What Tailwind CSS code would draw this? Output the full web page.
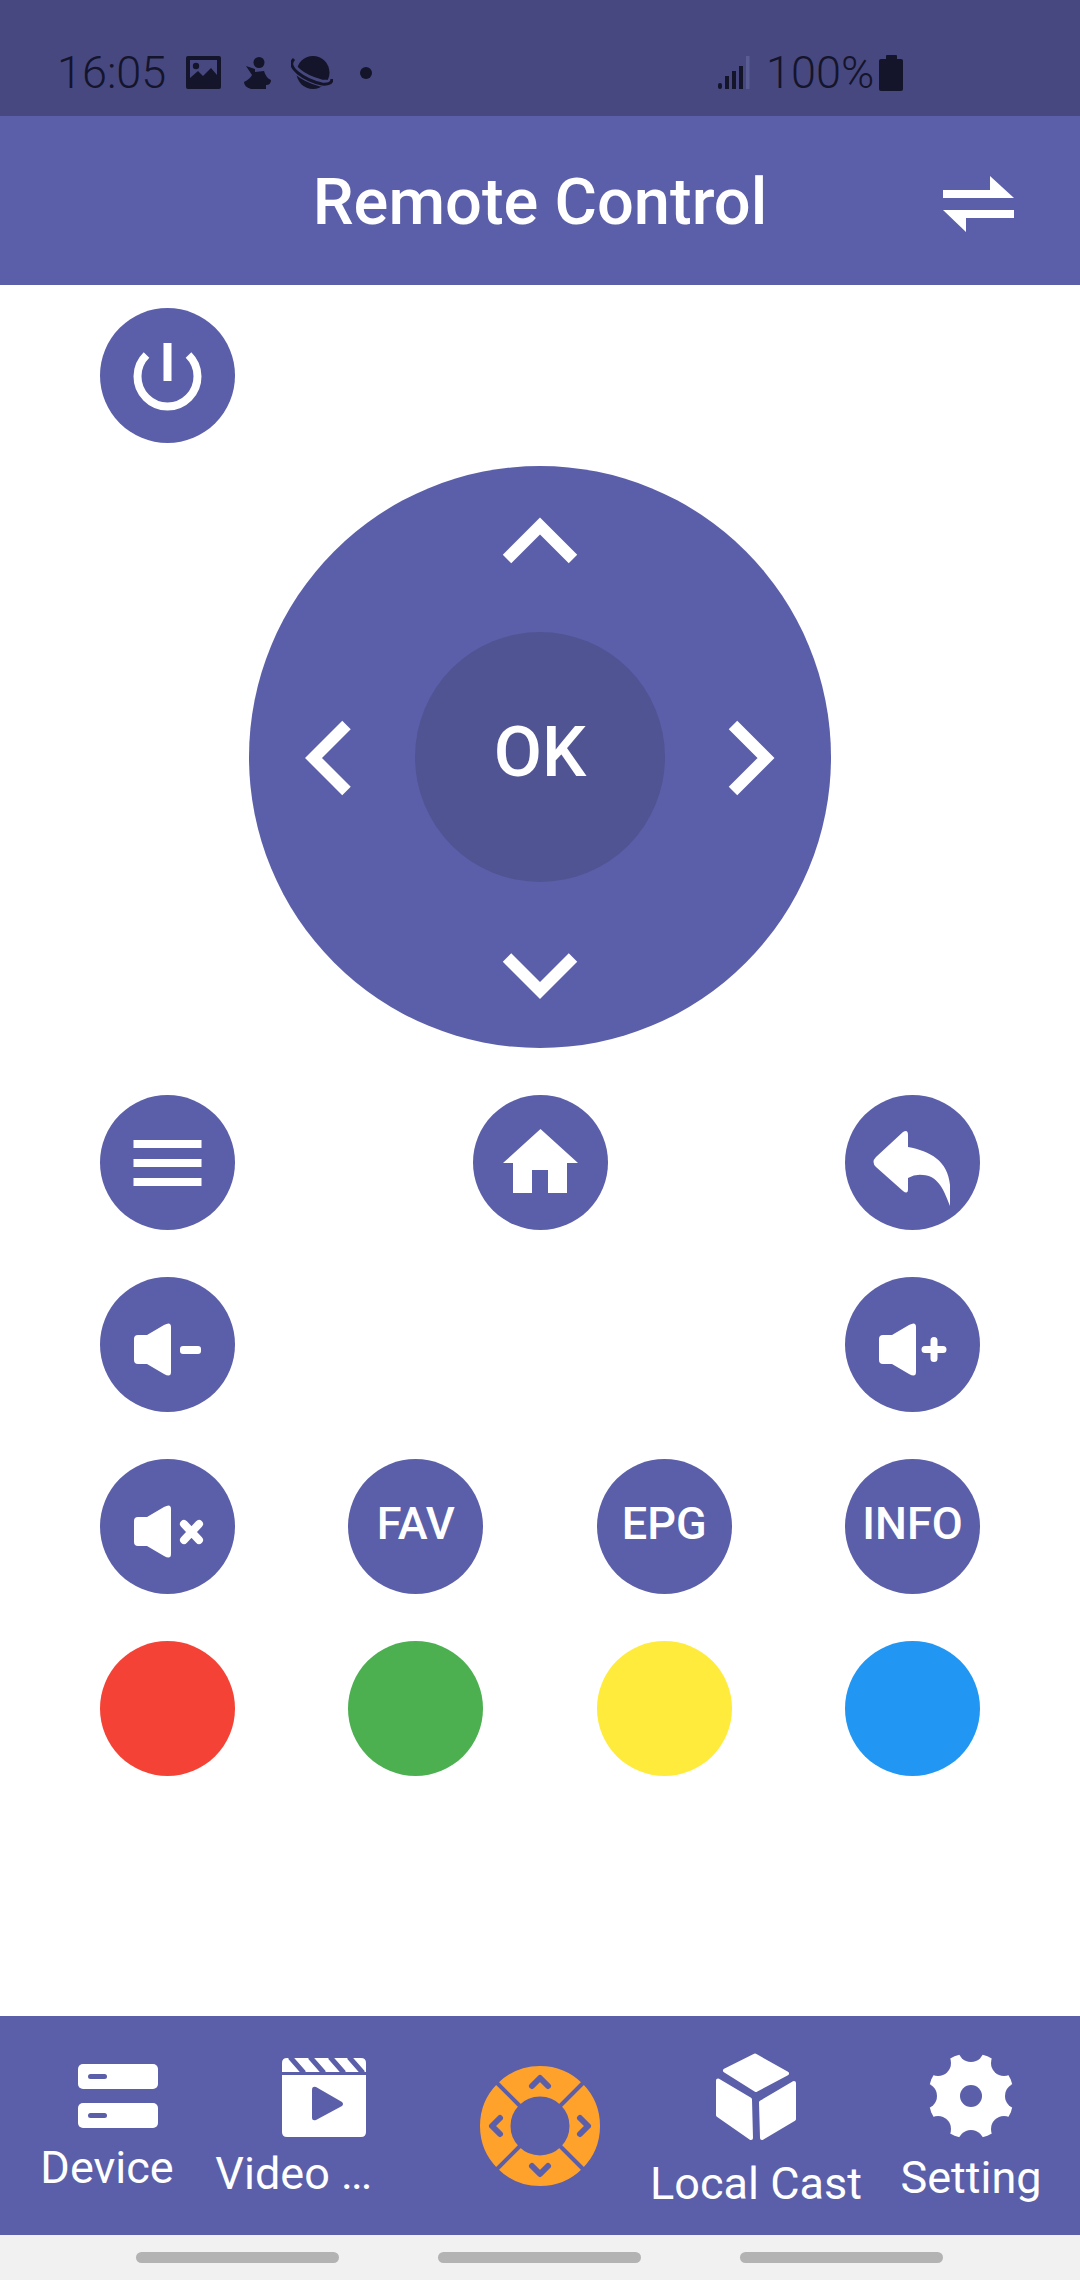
<!DOCTYPE html>
<html lang="en">
<head>
    <meta charset="utf-8" />
    <title>Remote Control</title>
    <meta name="viewport" content="width=device-width, initial-scale=1" />
    <script src="https://cdn.jsdelivr.net/npm/@tailwindcss/browser@4"></script>
</head>
<body class="font-['Roboto',sans-serif] w-[1080px] h-[2280px] overflow-hidden bg-white">
<div class="flex flex-col h-[2280px]">

    <!-- status bar -->
    <div class="h-[116px] bg-[#474880] flex items-center justify-between pl-[57px] pr-[177px] pt-[29px] text-[#14142a]">
        <div class="flex items-center">
            <span class="text-[45px] leading-none font-light w-[129px]">16:05</span>
            <svg class="w-[35px] h-[33px]" viewBox="0 0 35 33" fill="#14142a"><path fill-rule="evenodd" d="M2 0H33Q35 0 35 2V31Q35 33 33 33H2Q0 33 0 31V2Q0 0 2 0ZM4 4V22L12 15L17 20L25 12L31 19V4Z"/><circle cx="10" cy="10" r="3.2"/></svg>
            <svg class="w-[30px] h-[33px] ml-[22px]" viewBox="0 0 30 33" fill="#14142a"><circle cx="16" cy="6.500" r="5.500"/><path d="M3 10L12 13L12 16L21 15Q23 22 28 24Q28 29 23 29L23 33H8Q1 31 1 26Q7 23 9 19Z"/></svg>
            <svg class="w-[42px] h-[33px] ml-[18px]" viewBox="0 0 42 33"><circle cx="22" cy="16.500" r="16.500" fill="#14142a"/><path d="M3 5Q-1 9 7 16T30 27Q39 28 39 24" fill="none" stroke="#474880" stroke-width="7"/><path d="M3 3Q-3 9 7 17T31 28Q41 29 41 23" fill="none" stroke="#14142a" stroke-width="3"/></svg>
            <span class="w-[12px] h-[12px] rounded-full bg-[#14142a] ml-[27px]"></span>
        </div>
        <div class="flex items-center">
            <svg class="w-[33px] h-[33px]" viewBox="0 0 33 33" fill="#14142a"><rect x="0" y="27" width="4" height="6" rx="2"/><rect x="7" y="20" width="4" height="13"/><rect x="14" y="15" width="4" height="18"/><rect x="21" y="10" width="4" height="23"/><rect x="28" y="0" width="3.500" height="33" fill="#5a5c94"/></svg>
            <span class="text-[45px] leading-none font-light ml-[15px] w-[113px]">100%</span>
            <svg class="w-[24px] h-[36px]" viewBox="0 0 24 36" fill="#14142a"><rect x="7" y="0" width="11" height="6" rx="1"/><rect x="0" y="4" width="24" height="32" rx="2"/></svg>
        </div>
    </div>

    <!-- header -->
    <div class="h-[169px] bg-[#5b5fa9] relative flex items-center justify-center text-white">
        <h1 class="text-[65px] leading-none font-medium pt-[4px]">Remote Control</h1>
        <svg class="absolute left-[943px] top-[60px] w-[71px] h-[56px]" viewBox="0 0 71 56" fill="#fff"><path d="M47 0L71 22H0V14H47Z"/><path d="M0 34H71V42H23V56Z"/></svg>
    </div>

    <!-- remote -->
    <div class="flex-1 flex flex-col px-[100px] pt-[23px]">
        <button class="w-[135px] h-[135px] rounded-full bg-[#5b5fa9]">
            <svg viewBox="0 0 135 135" class="w-full h-full"><path d="M46.500 47A30 30 0 1 0 88.500 47" fill="none" stroke="#fff" stroke-width="8"/><rect x="63.500" y="35" width="8" height="38" fill="#fff"/></svg>
        </button>

        <div class="relative self-center mt-[23px] w-[582px] h-[582px] rounded-full bg-[#5b5fa9] flex items-center justify-center">
            <div class="w-[250px] h-[250px] rounded-full bg-[#515493] flex items-center justify-center text-white text-[70px] leading-none font-medium pb-[10px]">OK</div>
            <svg class="absolute inset-0" viewBox="0 0 582 582" fill="none" stroke="#fff" stroke-width="12">
                <path d="M258 93L291 60L324 93"/>
                <path d="M258 491.500L291 524.500L324 491.500"/>
                <path d="M97.500 259L64.500 292L97.500 325"/>
                <path d="M484 259L517 292L484 325"/>
            </svg>
        </div>

        <div class="flex justify-between mt-[47px]">
            <button class="w-[135px] h-[135px] rounded-full bg-[#5b5fa9]">
                <svg viewBox="0 0 135 135" class="w-full h-full" fill="#fff"><rect x="33.500" y="45" width="68" height="8"/><rect x="33.500" y="64" width="68" height="8"/><rect x="33.500" y="83" width="68" height="8"/></svg>
            </button>
            <button class="w-[135px] h-[135px] rounded-full bg-[#5b5fa9]">
                <svg viewBox="0 0 135 135" class="w-full h-full" fill="#fff"><path d="M67.500 34L105 68H94V98H75V75H59V98H40V68H30Z"/></svg>
            </button>
            <button class="w-[135px] h-[135px] rounded-full bg-[#5b5fa9]">
                <svg viewBox="0 0 135 135" class="w-full h-full" fill="#fff"><path d="M31 62L58 37Q63 34 63 40V52C85 56 103 66 105 90V111C98 92 92 81 78 80Q70 79 63 83V94Q63 100 58 96L31 72Q26 67 31 62Z"/></svg>
            </button>
        </div>

        <div class="flex justify-between mt-[47px]">
            <button class="w-[135px] h-[135px] rounded-full bg-[#5b5fa9]">
                <svg viewBox="0 0 135 135" class="w-full h-full" fill="#fff"><path d="M38 58H47L64 48Q71 44 71 50V95Q71 101 64 97L47 87H38Q34 87 34 83V62Q34 58 38 58Z"/><rect x="80" y="69" width="21" height="8" rx="3"/></svg>
            </button>
            <button class="w-[135px] h-[135px] rounded-full bg-[#5b5fa9]">
                <svg viewBox="0 0 135 135" class="w-full h-full" fill="#fff"><path d="M38 58H47L64 48Q71 44 71 50V95Q71 101 64 97L47 87H38Q34 87 34 83V62Q34 58 38 58Z"/><path d="M80 72.500H98M89 63.500V81.500" stroke="#fff" stroke-width="7" stroke-linecap="round"/></svg>
            </button>
        </div>

        <div class="flex justify-between mt-[47px] text-white text-[45px] leading-none font-medium">
            <button class="w-[135px] h-[135px] rounded-full bg-[#5b5fa9]">
                <svg viewBox="0 0 135 135" class="w-full h-full" fill="#fff"><path d="M38 58H47L64 48Q71 44 71 50V95Q71 101 64 97L47 87H38Q34 87 34 83V62Q34 58 38 58Z"/><path d="M84 65L99 81M99 65L84 81" stroke="#fff" stroke-width="8" stroke-linecap="round"/></svg>
            </button>
            <button class="w-[135px] h-[135px] rounded-full bg-[#5b5fa9] pb-[6px]">FAV</button>
            <button class="w-[135px] h-[135px] rounded-full bg-[#5b5fa9] pb-[6px]">EPG</button>
            <button class="w-[135px] h-[135px] rounded-full bg-[#5b5fa9] pb-[6px]">INFO</button>
        </div>

        <div class="flex justify-between mt-[47px]">
            <button class="w-[135px] h-[135px] rounded-full bg-[#f44336]"></button>
            <button class="w-[135px] h-[135px] rounded-full bg-[#4caf50]"></button>
            <button class="w-[135px] h-[135px] rounded-full bg-[#ffeb3b]"></button>
            <button class="w-[135px] h-[135px] rounded-full bg-[#2196f3]"></button>
        </div>
    </div>

    <!-- bottom tabs -->
    <div class="h-[219px] bg-[#5b5fa9] flex text-white text-[45px] leading-[54px] whitespace-nowrap">
        <div class="w-[214px] flex flex-col items-center pt-[48px]">
            <svg class="w-[80px] h-[64px] ml-[21px]" viewBox="0 0 80 64"><rect x="0" y="0" width="80" height="25" rx="5" fill="#fff"/><rect x="0" y="39" width="80" height="25" rx="5" fill="#fff"/><rect x="10" y="10" width="19" height="5" rx="2.500" fill="#5b5fa9"/><rect x="10" y="49" width="19" height="5" rx="2.500" fill="#5b5fa9"/></svg>
            <span class="mt-[13px]">Device</span>
        </div>
        <div class="w-[220px] flex flex-col items-center pt-[42px]">
            <svg class="w-[84px] h-[79px]" viewBox="0 0 84 79"><path d="M5 0H79Q84 0 84 5V14H0V5Q0 0 5 0Z" fill="#fff"/><path d="M8 -1L22 15M28 -1L42 15M48 -1L62 15M67 -1L81 15" stroke="#5b5fa9" stroke-width="5"/><path d="M0 17H84V74Q84 79 79 79H5Q0 79 0 74Z" fill="#fff"/><path d="M30 32Q30 28 34 29L60 44Q62 46 60 48L34 62Q30 63 30 60Z" fill="#5b5fa9"/></svg>
            <span class="mt-[10px] mr-[62px]">Video <span class="tracking-[-2px]">...</span></span>
        </div>
        <div class="w-[212px] flex justify-center pt-[50px]">
            <svg class="w-[120px] h-[120px]" viewBox="-60 -60 120 120">
                <circle r="44.750" fill="none" stroke="#ffa22c" stroke-width="30.500"/>
                <path d="M-20 -20L-43 -43M20 -20L43 -43M-20 20L-43 43M20 20L43 43" stroke="#5b5fa9" stroke-width="4"/>
                <g fill="none" stroke="#5b5fa9" stroke-width="6" stroke-linecap="round" stroke-linejoin="round">
                    <path d="M-8 -40L0 -48L8 -40"/>
                    <path d="M-8 40L0 48L8 40"/>
                    <path d="M-40 -8L-48 0L-40 8"/>
                    <path d="M40 -8L48 0L40 8"/>
                </g>
            </svg>
        </div>
        <div class="w-[220px] flex flex-col items-center pt-[37px]">
            <svg class="w-[80px] h-[87px]" viewBox="26 13 80 87" fill="#fff" stroke="#fff" stroke-width="4" stroke-linejoin="round"><path d="M65 15.500L97 33.500L66 50L35 30.500Z"/><path d="M28 40.500L60 59.500L61 98L28 75Z"/><path d="M104 43L71 62.500L72 98L104 79Z"/></svg>
            <span class="mt-[17px]">Local Cast</span>
        </div>
        <div class="w-[210px] flex flex-col items-center pt-[36px]">
            <svg class="w-[88px] h-[88px]" viewBox="-44 -44 88 88"><circle r="43" fill="#fff"/><g fill="#5b5fa9"><circle r="11"/><circle cy="-47" r="13"/><circle cy="47" r="13"/><circle cx="-47" r="13"/><circle cx="47" r="13"/><circle cx="33" cy="33" r="13"/><circle cx="-33" cy="33" r="13"/><circle cx="33" cy="-33" r="13"/><circle cx="-33" cy="-33" r="13"/></g></svg>
            <span class="mt-[11px]">Setting</span>
        </div>
    </div>

    <!-- system nav -->
    <div class="h-[45px] bg-[#f1f1f1] flex pl-[136px] gap-[99px] pt-[17px]">
        <span class="w-[203px] h-[11px] rounded-full bg-[#b3b3b3]"></span>
        <span class="w-[203px] h-[11px] rounded-full bg-[#b3b3b3]"></span>
        <span class="w-[203px] h-[11px] rounded-full bg-[#b3b3b3]"></span>
    </div>
</div>
</body>
</html>
